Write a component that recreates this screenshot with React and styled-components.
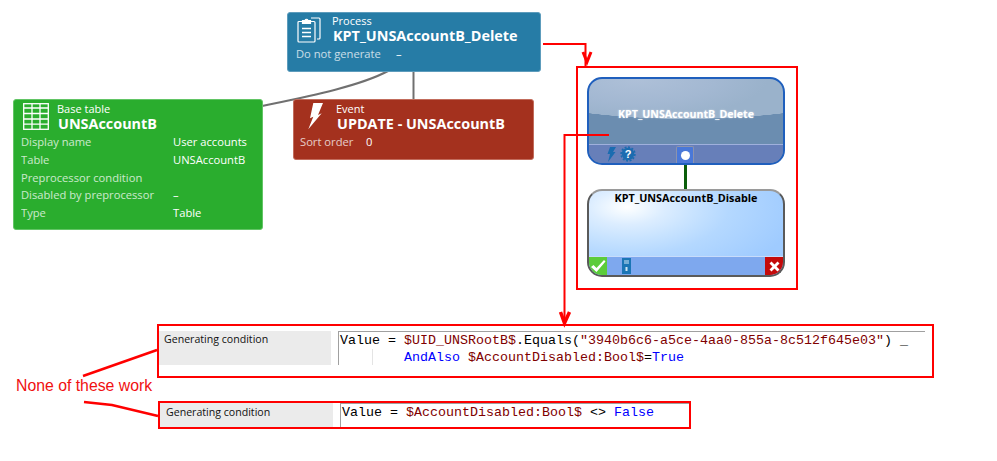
import React from "react";
import styled, { createGlobalStyle } from "styled-components";

const Global = createGlobalStyle`
  html, body {
    margin: 0;
    padding: 0;
    background: #fff;
  }
`;

const Canvas = styled.div`
  position: relative;
  width: 997px;
  height: 461px;
  overflow: hidden;
  background: #fff;
  font-family: "Open Sans", "Noto Sans", sans-serif;
`;

const Wires = styled.svg`
  position: absolute;
  left: 0;
  top: 0;
  width: 997px;
  height: 461px;
  z-index: ${(p) => p.$z};
  pointer-events: none;
`;

const Card = styled.div`
  position: absolute;
  left: ${(p) => p.$x}px;
  top: ${(p) => p.$y}px;
  width: ${(p) => p.$w}px;
  height: ${(p) => p.$h}px;
  box-sizing: border-box;
  padding-left: ${(p) => p.$pad}px;
  border-radius: 3px;
  border: 1px solid ${(p) => p.$edge};
  background: ${(p) => p.$bg};
  color: #fff;
  z-index: 1;
`;

const CardHead = styled.div`
  display: flex;
  align-items: flex-start;
  gap: ${(p) => p.$gap}px;
  height: ${(p) => p.$h}px;
  margin-left: ${(p) => p.$ml || 0}px;
`;

const HeadIcon = styled.svg`
  flex: none;
  display: block;
  margin-top: ${(p) => p.$top}px;
`;

const HeadText = styled.div`
  display: flex;
  flex-direction: column;
  padding-top: ${(p) => p.$top}px;
`;

const Kind = styled.div`
  font-size: 11px;
  line-height: 12px;
  margin-left: -1px;
`;

const Title = styled.div`
  font-size: 14.4px;
  line-height: 18px;
  font-weight: 700;
  white-space: nowrap;
`;

const Row = styled.div`
  display: flex;
  font-size: 11.2px;
  line-height: 17.75px;
  white-space: nowrap;
`;

const RowLabel = styled.div`
  width: ${(p) => p.$w}px;
  flex: none;
  opacity: 0.75;
`;

const RowValue = styled.div`
  color: #fff;
`;

const Bubble = styled.div`
  position: absolute;
  left: ${(p) => p.$x}px;
  top: ${(p) => p.$y}px;
  width: 198px;
  height: 88px;
  box-sizing: border-box;
  border: 2px solid ${(p) => p.$edge};
  border-top-color: ${(p) => p.$topEdge || p.$edge};
  border-radius: 15px;
  background: ${(p) => p.$bg};
  display: flex;
  flex-direction: column;
  overflow: hidden;
  z-index: 1;
`;

const BubbleName = styled.div`
  flex: 1;
  text-align: center;
  font-size: ${(p) => p.$size}px;
  font-weight: 700;
  white-space: nowrap;
  padding-top: ${(p) => p.$top}px;
  line-height: 14px;
  color: ${(p) => p.$color};
  text-shadow: ${(p) => p.$shadow};
`;

const BubbleBar = styled.div`
  height: 18px;
  flex: none;
  display: flex;
  align-items: center;
  position: relative;
  border-top: 1px solid ${(p) => p.$line};
  background: ${(p) => p.$bg};
`;

const BarIcon = styled.svg`
  display: block;
  flex: none;
  margin-left: ${(p) => p.$ml || 0}px;
`;

const Port = styled.div`
  position: absolute;
  left: 87px;
  top: 1px;
  width: 18px;
  height: 18px;
  box-sizing: border-box;
  border: 1px solid #8c93ad;
  border-bottom: none;
  border-radius: 2px 2px 0 0;
  background: #4a78d8;
  display: flex;
  align-items: center;
  justify-content: center;
  &::after {
    content: "";
    width: 9px;
    height: 9px;
    border-radius: 50%;
    background: #fff;
  }
`;

const Tile = styled.div`
  width: 18px;
  height: 18px;
  flex: none;
  background: ${(p) => p.$bg};
  display: flex;
  align-items: center;
  justify-content: center;
  margin-left: ${(p) => (p.$end ? "auto" : "0")};
`;

const Stem = styled.div`
  position: absolute;
  left: 684px;
  top: 164px;
  width: 3px;
  height: 25px;
  background: #0b5e0b;
`;

const RedBox = styled.div`
  position: absolute;
  left: ${(p) => p.$x}px;
  top: ${(p) => p.$y}px;
  width: ${(p) => p.$w}px;
  height: ${(p) => p.$h}px;
  box-sizing: border-box;
  border: 2px solid #f00;
`;

const ConditionRow = styled.div`
  position: absolute;
  left: ${(p) => p.$x}px;
  top: ${(p) => p.$y}px;
  width: ${(p) => p.$w}px;
  height: ${(p) => p.$h}px;
  display: flex;
  gap: 7px;
`;

const CondLabel = styled.div`
  width: ${(p) => p.$w}px;
  flex: none;
  box-sizing: border-box;
  background: #ebebeb;
  padding-left: ${(p) => p.$pad}px;
  font-size: 10.6px;
  line-height: ${(p) => p.$line}px;
  color: #111;
`;

const CodeBox = styled.div`
  flex: 1;
  box-sizing: border-box;
  background: #fff;
  border-top: 1px solid #a0a0a0;
  border-left: 1px solid #a0a0a0;
  padding-left: 1px;
  font-family: "Liberation Mono", monospace;
  font-size: 13.33px;
  color: #000;
`;

const CodeLine = styled.div`
  height: 17px;
  line-height: 17px;
  white-space: pre;
  padding-left: ${(p) => p.$indent || 0}px;
`;

const Variable = styled.span`
  color: #800000;
`;

const Keyword = styled.span`
  color: #0000ff;
`;

const Guide = styled.div`
  position: absolute;
  left: 213px;
  top: 18px;
  width: 1px;
  height: 16px;
  background: #e4e4e4;
`;

const Note = styled.div`
  position: absolute;
  left: 16px;
  top: 377px;
  font-family: "Liberation Sans", Arial, sans-serif;
  font-size: 15.8px;
  line-height: 18px;
  color: #f01010;
  white-space: nowrap;
`;

const ClipboardIcon = () => (
  <HeadIcon $top={2} width="24" height="28" viewBox="0 0 24 28" fill="none" stroke="#fff" strokeWidth="1.2">
    <path d="M5.500 6.500H2a1 1 0 0 0-1 1V26a1 1 0 0 0 1 1h15a1 1 0 0 0 1-1V7.500a1 1 0 0 0-1-1h-3.500" />
    <path d="M5.500 8.500V5.500h2.500a1.600 1.600 0 0 1 3 0h2.500v3z" fill="#fff" />
    <path d="M14 3h8a1 1 0 0 1 1 1v19a1 1 0 0 1-1 1h-2" />
    <path d="M5 13.500h9M5 17.500h9M5 21.500h9" strokeWidth="1.400" />
  </HeadIcon>
);

const TableIcon = () => (
  <HeadIcon $top={3} width="26" height="27" viewBox="0 0 26 27" fill="none" stroke="#fff" strokeWidth="1.300">
    <rect x="0.700" y="0.700" width="24.600" height="25.600" />
    <path d="M0.700 5h24.600M0.700 10.500h24.600M0.700 16h24.600M0.700 21.200h24.600M9 0.700v25.600M17 0.700v25.600" />
  </HeadIcon>
);

const BoltIcon = () => (
  <HeadIcon $top={3} width="17" height="28" viewBox="0 0 17 28" fill="#fff">
    <path d="M5.300 0L15 0 10 12 13.700 10.300 0.300 26.300 5.300 13.700 2 15.300z" />
  </HeadIcon>
);

const HelpGear = () => (
  <BarIcon $ml={4} width="16" height="16" viewBox="0 0 16 16">
    <circle cx="8" cy="8" r="6.200" fill="#1b6cb0" />
    <circle cx="8" cy="8" r="6.900" fill="none" stroke="#1b6cb0" strokeWidth="1.600" strokeDasharray="2 1.600" />
    <text x="8" y="11.800" textAnchor="middle" fontSize="11" fontWeight="700" fill="#fff" fontFamily="Liberation Sans">?</text>
  </BarIcon>
);

export default function App() {
  return (
    <Canvas>
      <Global />

      <Wires $z={0} viewBox="0 0 997 461">
        <path d="M388 71C360 86 310 96 262 106" fill="none" stroke="#707070" strokeWidth="2" />
        <path d="M413.500 71V99" fill="none" stroke="#707070" strokeWidth="2" />
      </Wires>

      <Card $x={287} $y={12} $w={254} $h={60} $pad={8} $edge="#5d9cbc" $bg="#267ca6">
        <CardHead $gap={12} $h={32} $ml={1}>
          <ClipboardIcon />
          <HeadText $top={2}>
            <Kind>Process</Kind>
            <Title>KPT_UNSAccountB_Delete</Title>
          </HeadText>
        </CardHead>
        <Row>
          <RowLabel $w={100}>Do not generate</RowLabel>
          <RowValue>–</RowValue>
        </Row>
      </Card>

      <Card $x={293} $y={99} $w={241} $h={61} $pad={6} $edge="#c26c5c" $bg="#a4311e">
        <CardHead $gap={12} $h={33} $ml={8}>
          <BoltIcon />
          <HeadText $top={3}>
            <Kind>Event</Kind>
            <Title>UPDATE - UNSAccountB</Title>
          </HeadText>
        </CardHead>
        <Row>
          <RowLabel $w={66}>Sort order</RowLabel>
          <RowValue>0</RowValue>
        </Row>
      </Card>

      <Card $x={13} $y={99} $w={250} $h={131} $pad={7} $edge="#62c565" $bg="#2aad2e">
        <CardHead $gap={9} $h={33} $ml={2}>
          <TableIcon />
          <HeadText $top={3}>
            <Kind>Base table</Kind>
            <Title>UNSAccountB</Title>
          </HeadText>
        </CardHead>
        <Row>
          <RowLabel $w={152}>Display name</RowLabel>
          <RowValue>User accounts</RowValue>
        </Row>
        <Row>
          <RowLabel $w={152}>Table</RowLabel>
          <RowValue>UNSAccountB</RowValue>
        </Row>
        <Row>
          <RowLabel $w={152}>Preprocessor condition</RowLabel>
        </Row>
        <Row>
          <RowLabel $w={152}>Disabled by preprocessor</RowLabel>
          <RowValue>–</RowValue>
        </Row>
        <Row>
          <RowLabel $w={152}>Type</RowLabel>
          <RowValue>Table</RowValue>
        </Row>
      </Card>

      <Stem />

      <Bubble
        $x={587}
        $y={77}
        $edge="#1f5fbd"
        $bg="radial-gradient(ellipse 230px 60px at 50% -20px, transparent 99.5%, #6b8db0 100%), radial-gradient(ellipse 130px 40px at 25% 0%, #aec0d8, #a3b8d2 60%, #9ab2cb)"
      >
        <BubbleName $size={10.6} $top={28} $color="#fff" $shadow="0 0 2px rgba(255,255,255,0.6)">KPT_UNSAccountB_Delete</BubbleName>
        <BubbleBar $line="#9fb0dc" $bg="#677fb9">
          <BarIcon $ml={18} width="9" height="15" viewBox="0 0 9 15">
            <path d="M3 0H9L6 5H8.500L1 15 3 7H0.500z" fill="#1b6cb0" />
          </BarIcon>
          <HelpGear />
          <Port />
        </BubbleBar>
      </Bubble>

      <Bubble
        $x={587}
        $y={189}
        $edge="#5a5a5a"
        $topEdge="#9a9a9a"
        $bg="radial-gradient(ellipse 170px 80px at 38px 16px, #ffffff 0%, #f2f9ff 8%, #dcedff 22%, #c8e3ff 40%, #b4d8ff 60%, #9fcbff 100%), #9fcbff"
      >
        <BubbleName $size={10.8} $top={0} $color="#000" $shadow="none">KPT_UNSAccountB_Disable</BubbleName>
        <BubbleBar $line="#c8dcfb" $bg="#7ea8ee">
          <Tile $bg="#5ccc3a">
            <svg width="16" height="14" viewBox="0 0 16 14">
              <path d="M1 8l2.500-2 3 3L14 1l1.500 1.500L6.500 13z" fill="#fff" />
            </svg>
          </Tile>
          <BarIcon $ml={15} width="9" height="16" viewBox="0 0 9 16">
            <rect width="9" height="16" fill="#1b75b5" />
            <path d="M2 3h5M2 5h5" stroke="#cfe6f5" />
            <rect x="3.500" y="9" width="2" height="4" fill="#cfe6f5" />
          </BarIcon>
          <Tile $end $bg="#c40a0a">
            <svg width="13" height="13" viewBox="0 0 13 13">
              <path d="M1.500 3.500l2-2L6.500 4.500l3-3 2 2-3 3 3 3-2 2-3-3-3 3-2-2 3-3z" fill="#fff" />
            </svg>
          </Tile>
        </BubbleBar>
      </Bubble>

      <ConditionRow $x={159} $y={331} $w={766} $h={34}>
        <CondLabel $w={172} $pad={5} $line={16}>Generating condition</CondLabel>
        <CodeBox>
          <CodeLine>
            {"Value = "}<Variable>$UID_UNSRootB$</Variable>{".Equals("}<Variable>"3940b6c6-a5ce-4aa0-855a-8c512f645e03"</Variable>{") _"}
          </CodeLine>
          <CodeLine $indent={64}>
            <Keyword>AndAlso</Keyword>{" "}<Variable>$AccountDisabled:Bool$</Variable>{"="}<Keyword>True</Keyword>
          </CodeLine>
          <Guide />
        </CodeBox>
      </ConditionRow>

      <ConditionRow $x={160} $y={403} $w={530} $h={24}>
        <CondLabel $w={173} $pad={6} $line={18}>Generating condition</CondLabel>
        <CodeBox>
          <CodeLine>
            {"Value = "}<Variable>$AccountDisabled:Bool$</Variable>{" <> "}<Keyword>False</Keyword>
          </CodeLine>
        </CodeBox>
      </ConditionRow>

      <RedBox $x={576} $y={66} $w={222} $h={224} />
      <RedBox $x={157} $y={324} $w={777} $h={54} />
      <RedBox $x={158} $y={401} $w={533} $h={28} />

      <Wires $z={2} viewBox="0 0 997 461">
        <g fill="none" stroke="#f00" strokeWidth="2">
          <path d="M543 44H585.500V66" />
          <path d="M583 52L587 62 591 52" strokeWidth="3" />
          <path d="M609 135H564.500V322" />
          <path d="M560.500 312L564.500 323 569.500 312" strokeWidth="3.500" />
          <path d="M83 376L157 350" strokeWidth="2.500" />
          <path d="M84 402L112 405 158 416" strokeWidth="2.500" />
        </g>
      </Wires>

      <Note>None of these work</Note>
    </Canvas>
  );
}
